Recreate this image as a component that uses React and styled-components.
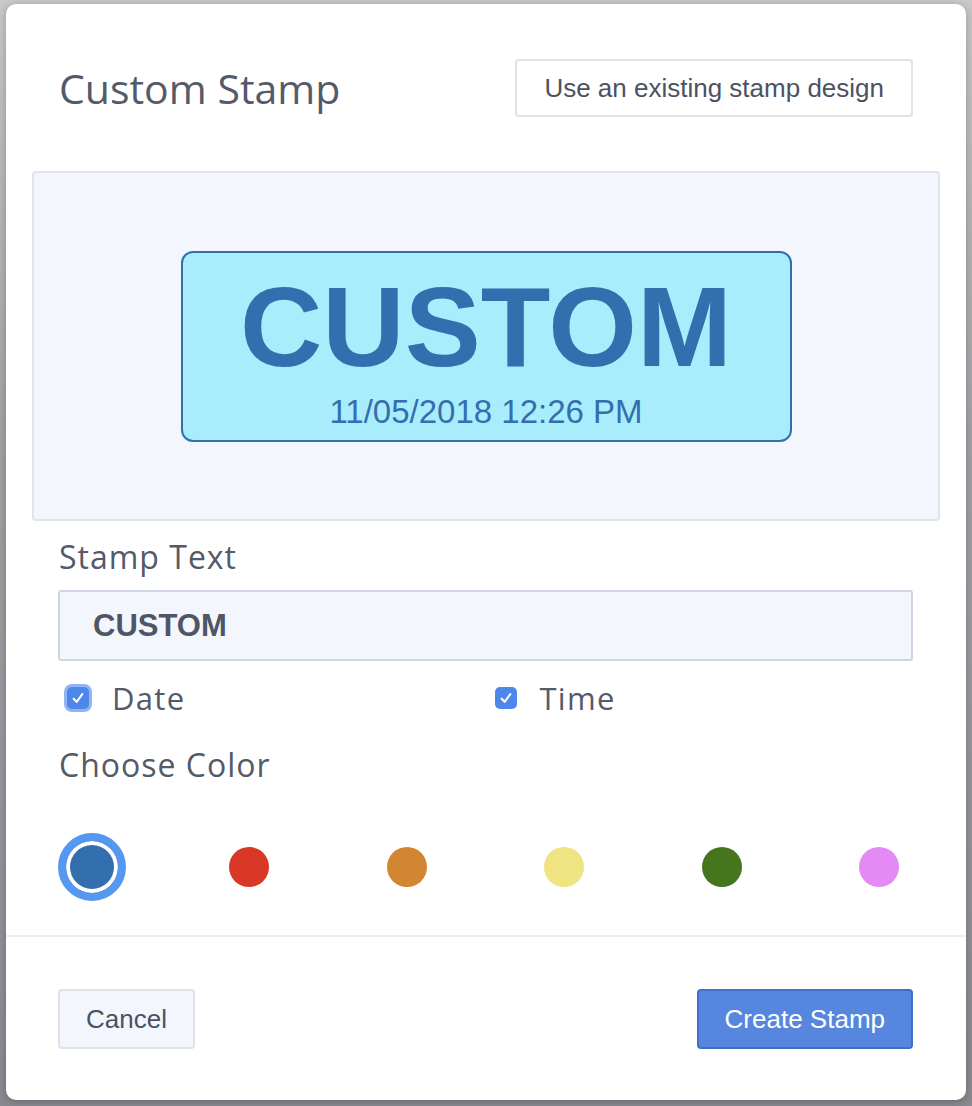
import React, { useState } from 'react'
import styled, { createGlobalStyle } from 'styled-components'

const GlobalStyle = createGlobalStyle`
    html, body {
        margin: 0;
        padding: 0;
    }
    body {
        font-family: "Open Sans", "Liberation Sans", sans-serif;
    }
`

const Backdrop = styled.div`
    width: 972px;
    height: 1106px;
    box-sizing: border-box;
    padding: 4px 6px 6px 6px;
    background: linear-gradient(180deg, #c9c9cb 0%, #a4a4a8 40%, #8a8a92 100%);
    overflow: hidden;
`

const Modal = styled.div`
    width: 960px;
    height: 1096px;
    background: #fff;
    border-radius: 10px;
    display: flex;
    flex-direction: column;
    box-shadow: 0 2px 10px rgba(0, 0, 0, 0.25);
`

const Header = styled.div`
    display: flex;
    align-items: center;
    justify-content: space-between;
    padding: 55px 53px 0 53px;
`

const Title = styled.h2`
    margin: 0;
    font-weight: 400;
    font-size: 41px;
    color: #545a69;
`

const Button = styled.button`
    box-sizing: border-box;
    height: ${p => p.$h || 58}px;
    padding: 0 ${p => p.$px || 28}px;
    font-family: "Liberation Sans", Arial, sans-serif;
    font-size: ${p => p.$fs || 26}px;
    color: ${p => (p.$primary ? '#ffffff' : '#4c5261')};
    background: ${p => (p.$primary ? '#5686dd' : p.$bg || '#ffffff')};
    border: 2px solid ${p => (p.$primary ? '#3f6fcb' : '#dfe2e9')};
    border-radius: 4px;
    cursor: pointer;
`

const Preview = styled.div`
    margin: 54px 26px 0 26px;
    height: 350px;
    box-sizing: border-box;
    background: #f3f6fd;
    border: 2px solid #e0e4eb;
    border-radius: 4px;
    display: flex;
    align-items: center;
    justify-content: center;
`

const Stamp = styled.div`
    width: 611px;
    height: 191px;
    box-sizing: border-box;
    background: ${p => p.$fill};
    border: 2px solid ${p => p.$ink};
    border-radius: 12px;
    color: ${p => p.$ink};
    font-family: "Liberation Sans", Arial, sans-serif;
    display: flex;
    flex-direction: column;
    align-items: center;
    padding-top: 22px;
`

const StampWord = styled.div`
    font-weight: 700;
    font-size: 114px;
    line-height: 104px;
`

const StampDate = styled.div`
    margin-top: 15px;
    font-size: 33px;
    line-height: 36px;
`

const Body = styled.div`
    padding: 0 53px 0 52px;
    display: flex;
    flex-direction: column;
`

const Label = styled.div`
    margin-top: ${p => p.$mt}px;
    padding-left: 1px;
    font-size: 32px;
    letter-spacing: 1px;
    line-height: 40px;
    color: #545a69;
`

const TextInput = styled.input`
    margin-top: 13px;
    height: 71px;
    box-sizing: border-box;
    padding: 0 33px;
    background: #f3f6fd;
    border: 2px solid #d0d5e3;
    border-radius: 3px;
    font-family: "Liberation Sans", Arial, sans-serif;
    font-weight: 700;
    font-size: 31px;
    color: #4f5564;
    outline: none;
`

const CheckRow = styled.div`
    margin-top: 16px;
    display: grid;
    grid-template-columns: 1fr 1fr;
    height: 40px;
`

const CheckItem = styled.label`
    display: flex;
    align-items: center;
    gap: 23px;
    padding-left: 9px;
    font-size: 31px;
    letter-spacing: 1.3px;
    color: #545a69;
    cursor: pointer;
`

const Box = styled.span`
    width: 22px;
    height: 22px;
    box-sizing: border-box;
    border-radius: 5px;
    background: #4f86ea;
    display: flex;
    align-items: center;
    justify-content: center;
    box-shadow: ${p => (p.$focus ? '0 0 0 3px #8fb3f3' : 'none')};
`

const Swatches = styled.div`
    margin-top: 48px;
    height: 68px;
    display: flex;
    align-items: center;
    justify-content: space-between;
`

const SwatchSlot = styled.div`
    width: 68px;
    height: 68px;
    display: flex;
    align-items: center;
    justify-content: center;
`

const Swatch = styled.button`
    width: ${p => (p.$active ? 68 : 40)}px;
    height: ${p => (p.$active ? 68 : 40)}px;
    padding: 0;
    border-radius: 50%;
    background: ${p => p.$color};
    border: ${p => (p.$active ? '8px solid #5597f1' : 'none')};
    box-shadow: ${p => (p.$active ? 'inset 0 0 0 4px #ffffff' : 'none')};
    cursor: pointer;
`

const Divider = styled.div`
    margin-top: 34px;
    height: 2px;
    background: #eceef1;
`

const Footer = styled.div`
    display: flex;
    justify-content: space-between;
    padding: 52px 53px 0 52px;
`

const colors = [
    { ink: '#336fae', fill: '#a9ecfb' },
    { ink: '#d93826', fill: '#fbd2cc' },
    { ink: '#d38632', fill: '#fbe6cf' },
    { ink: '#efe382', fill: '#fdf9dd' },
    { ink: '#45761e', fill: '#d6ecc6' },
    { ink: '#e48af4', fill: '#fae1fd' },
]

const Check = () => (
    <svg width="16" height="16" viewBox="0 0 14 14">
        <path d="M3.2 7.6 L5.8 10.4 L10.8 3.6" fill="none" stroke="#fff" strokeWidth="1.8" strokeLinecap="round" strokeLinejoin="round" />
    </svg>
)

export default function App() {
    const [text, setText] = useState('CUSTOM')
    const [active, setActive] = useState(0)
    const c = colors[active]

    return (
        <>
            <GlobalStyle />
            <Backdrop>
                <Modal>
                    <Header>
                        <Title>Custom Stamp</Title>
                        <Button $px={27}>Use an existing stamp design</Button>
                    </Header>
                    <Preview>
                        <Stamp $ink={c.ink} $fill={c.fill}>
                            <StampWord>{text}</StampWord>
                            <StampDate>11/05/2018 12:26 PM</StampDate>
                        </Stamp>
                    </Preview>
                    <Body>
                        <Label $mt={16}>Stamp Text</Label>
                        <TextInput value={text} onChange={e => setText(e.target.value)} />
                        <CheckRow>
                            <CheckItem>
                                <Box $focus><Check /></Box>
                                Date
                            </CheckItem>
                            <CheckItem>
                                <Box><Check /></Box>
                                Time
                            </CheckItem>
                        </CheckRow>
                        <Label $mt={28}>Choose Color</Label>
                        <Swatches>
                            {colors.map((col, i) => (
                                <SwatchSlot key={col.ink}>
                                    <Swatch $color={col.ink} $active={i === active} onClick={() => setActive(i)} />
                                </SwatchSlot>
                            ))}
                        </Swatches>
                    </Body>
                    <Divider />
                    <Footer>
                        <Button $h={60} $px={26} $bg="#f3f6fd">Cancel</Button>
                        <Button $h={60} $px={26} $primary>Create Stamp</Button>
                    </Footer>
                </Modal>
            </Backdrop>
        </>
    )
}
